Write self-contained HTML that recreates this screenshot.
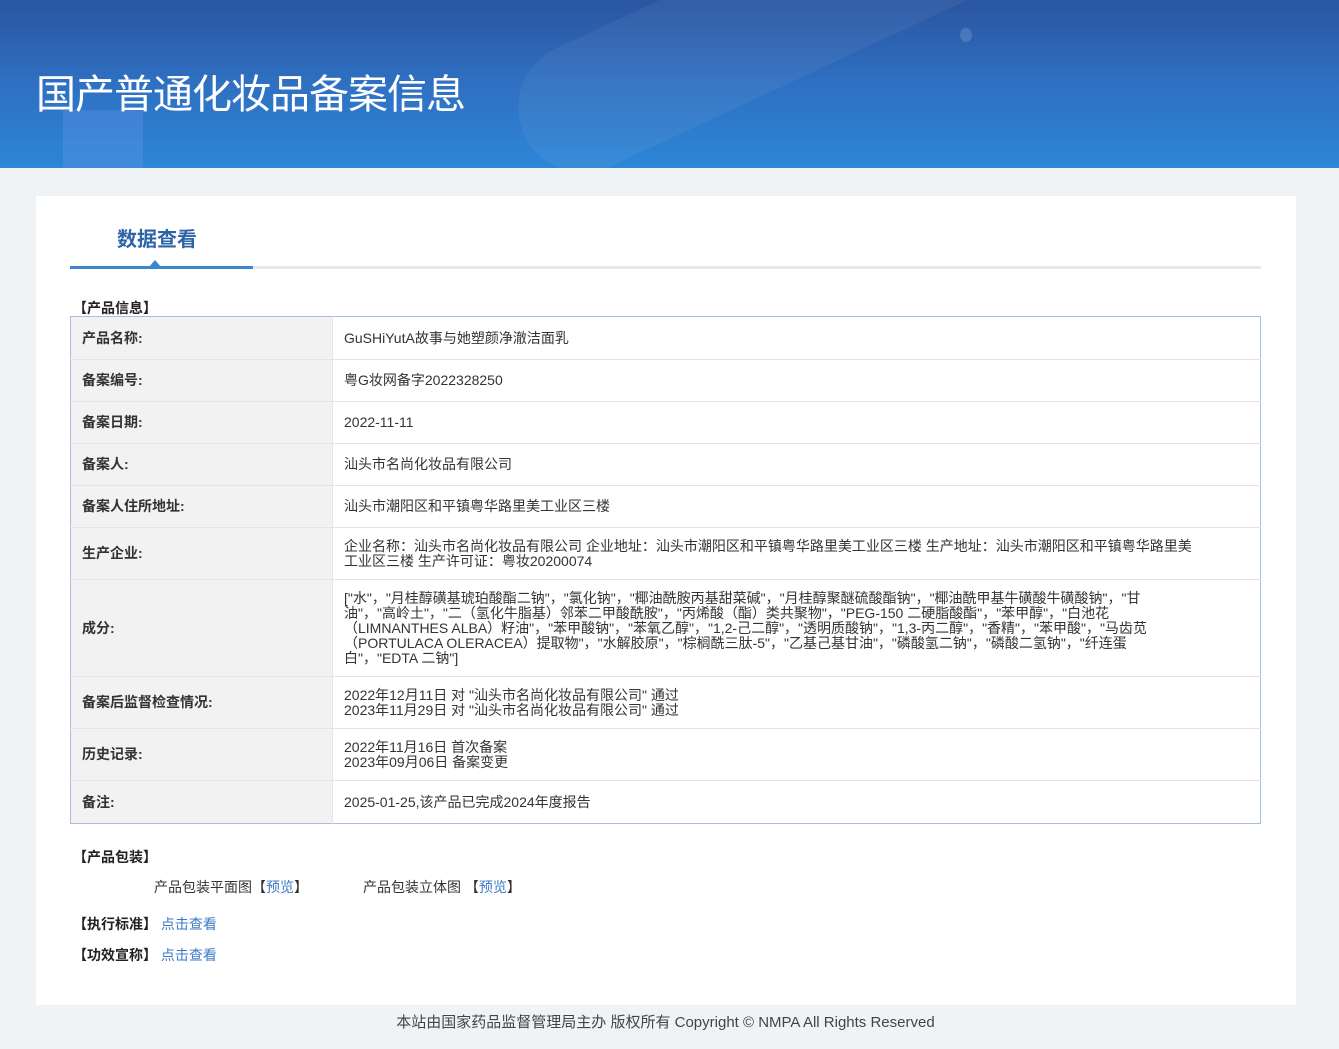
<!DOCTYPE html>
<html><head><meta charset="utf-8"><style>
*{margin:0;padding:0;box-sizing:border-box}
body{width:1339px;height:1049px;background:#eff3f6;font-family:"Liberation Sans","Noto Sans CJK SC",sans-serif;font-size:14px;color:#333;position:relative;overflow:hidden}
.hdr{position:absolute;left:0;top:0;width:1339px;height:168px;background:linear-gradient(180deg,#2a55a0 0%,#2f70c2 50%,#2d86d6 100%);overflow:hidden}
.hdr h1{position:absolute;left:36px;top:66px;font-size:40px;font-weight:normal;color:#fff;letter-spacing:-1px;font-family:"Noto Sans CJK SC",sans-serif;line-height:50px}
.card{position:absolute;left:36px;top:196px;width:1260px;height:809px;background:#fff}
.tab{position:absolute;left:117px;top:223px;font-size:20px;font-weight:bold;color:#2d64a8;font-family:"Noto Sans CJK SC",sans-serif}
.line{position:absolute;left:70px;top:266px;width:1191px;height:3px;background:#e8e8e8}
.line2{position:absolute;left:70px;top:266px;width:183px;height:3px;background:#3b86cf}
.tri{position:absolute;left:149px;top:260px;width:0;height:0;border-left:6px solid transparent;border-right:6px solid transparent;border-bottom:7px solid #3b86cf}
.sec{position:absolute;left:73px;font-weight:bold;color:#222;font-size:14px}
table{position:absolute;left:70px;top:316px;width:1191px;border-collapse:collapse;border:1px solid #a9bfd8}
td{border-bottom:1px solid #e5e5e5;padding:0 11px;font-size:14px;line-height:15px;vertical-align:middle;color:#333}
td.l{width:262px;background:#f2f2f2;font-weight:bold;color:#333;font-size:14px;border-right:1px solid #e5e5e5}
a{color:#3b7bc6;text-decoration:none}
.foot{position:absolute;left:0;top:1011px;width:1331px;text-align:center;font-size:15px;color:#444}
</style></head><body>
<div class="hdr">
<div style="position:absolute;left:500px;top:-40px;width:520px;height:130px;border-radius:65px;background:rgba(255,255,255,.05);transform:rotate(-25deg)"></div>
<div style="position:absolute;left:63px;top:110px;width:80px;height:70px;background:rgba(120,160,240,.25)"></div>
<div style="position:absolute;left:960px;top:28px;width:12px;height:14px;border-radius:50%;background:rgba(255,255,255,.15)"></div>
<h1>国产普通化妆品备案信息</h1></div>
<div class="card"></div>
<div class="tab">数据查看</div>
<div class="line"></div><div class="line2"></div><div class="tri"></div>
<div class="sec" style="top:298px">【产品信息】</div>
<table>
<tr style="height:43px"><td class="l">产品名称:</td><td>GuSHiYutA故事与她塑颜净澈洁面乳</td></tr>
<tr style="height:42px"><td class="l">备案编号:</td><td>粤G妆网备字2022328250</td></tr>
<tr style="height:42px"><td class="l">备案日期:</td><td>2022-11-11</td></tr>
<tr style="height:42px"><td class="l">备案人:</td><td>汕头市名尚化妆品有限公司</td></tr>
<tr style="height:42px"><td class="l">备案人住所地址:</td><td>汕头市潮阳区和平镇粤华路里美工业区三楼</td></tr>
<tr style="height:52px"><td class="l">生产企业:</td><td style="padding-right:60px">企业名称：汕头市名尚化妆品有限公司 企业地址：汕头市潮阳区和平镇粤华路里美工业区三楼 生产地址：汕头市潮阳区和平镇粤华路里美工业区三楼 生产许可证：粤妆20200074</td></tr>
<tr style="height:97px"><td class="l">成分:</td><td style="padding-right:95px">["水"，"月桂醇磺基琥珀酸酯二钠"，"氯化钠"，"椰油酰胺丙基甜菜碱"，"月桂醇聚醚硫酸酯钠"，"椰油酰甲基牛磺酸牛磺酸钠"，"甘油"，"高岭土"，"二（氢化牛脂基）邻苯二甲酸酰胺"，"丙烯酸（酯）类共聚物"，"PEG-150 二硬脂酸酯"，"苯甲醇"，"白池花（LIMNANTHES ALBA）籽油"，"苯甲酸钠"，"苯氧乙醇"，"1,2-己二醇"，"透明质酸钠"，"1,3-丙二醇"，"香精"，"苯甲酸"，"马齿苋（PORTULACA OLERACEA）提取物"，"水解胶原"，"棕榈酰三肽-5"，"乙基己基甘油"，"磷酸氢二钠"，"磷酸二氢钠"，"纤连蛋白"，"EDTA 二钠"]</td></tr>
<tr style="height:52px"><td class="l">备案后监督检查情况:</td><td>2022年12月11日 对 "汕头市名尚化妆品有限公司" 通过<br>2023年11月29日 对 "汕头市名尚化妆品有限公司" 通过</td></tr>
<tr style="height:52px"><td class="l">历史记录:</td><td>2022年11月16日 首次备案<br>2023年09月06日 备案变更</td></tr>
<tr style="height:43px"><td class="l" style="border-bottom:none">备注:</td><td style="border-bottom:none">2025-01-25,该产品已完成2024年度报告</td></tr>
</table>
<div class="sec" style="top:847px">【产品包装】</div>
<div style="position:absolute;left:154px;top:877px">产品包装平面图【<a>预览</a>】</div>
<div style="position:absolute;left:363px;top:877px">产品包装立体图 【<a>预览</a>】</div>
<div class="sec" style="top:914px">【执行标准】 <a style="font-weight:normal">点击查看</a></div>
<div class="sec" style="top:945px">【功效宣称】 <a style="font-weight:normal">点击查看</a></div>
<div class="foot">本站由国家药品监督管理局主办 版权所有 Copyright © NMPA All Rights Reserved</div>
</body></html>
